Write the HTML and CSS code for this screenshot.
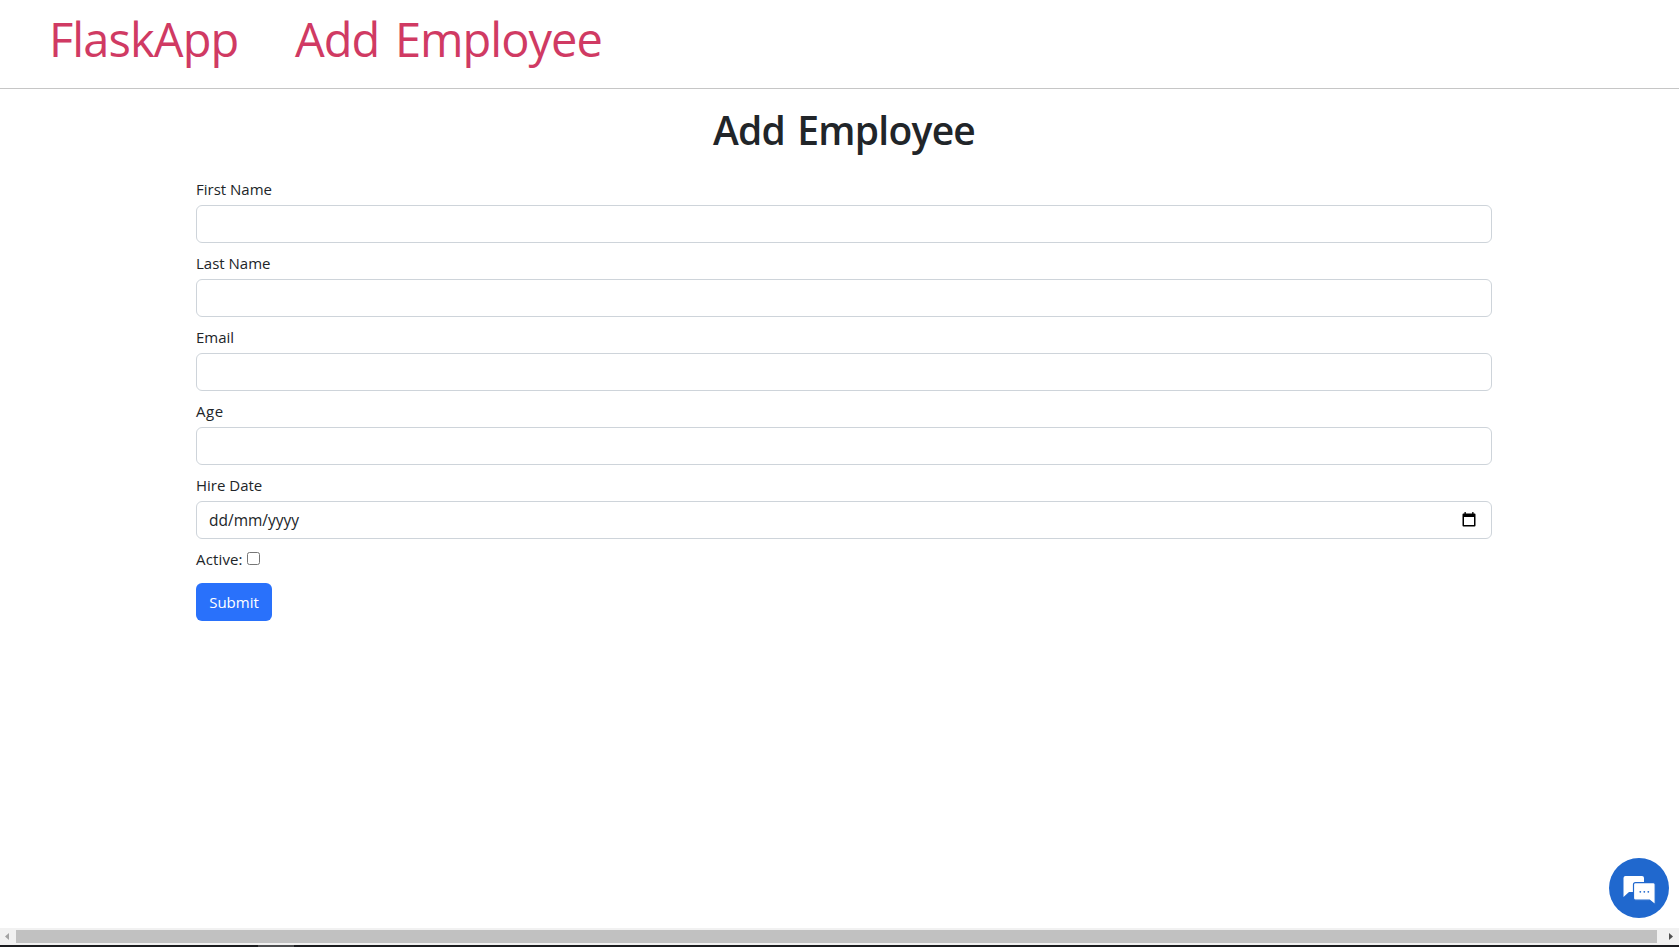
FILE: index.html
```html
<!DOCTYPE html>
<html lang="en">
<head>
<meta charset="utf-8">
<title>Add Employee</title>
<link rel="stylesheet" href="styles.css">
</head>
<body>
<header class="nav">
  <a class="brand">FlaskApp</a>
  <a class="nav-link">Add Employee</a>
</header>
<main class="content">
  <h1 class="title"><span>Add Employee</span></h1>
  <form class="form">
    <div class="group"><label class="first">First Name</label><div class="control"></div></div>
    <div class="group"><label class="last">Last Name</label><div class="control"></div></div>
    <div class="group"><label class="email">Email</label><div class="control"></div></div>
    <div class="group"><label class="age">Age</label><div class="control"></div></div>
    <div class="group"><label class="hire">Hire Date</label>
      <div class="control date"><span class="placeholder">dd/mm/yyyy</span>
        <svg class="calendar" width="14" height="15" viewBox="0 0 14 15"><path fill="#000" fill-rule="evenodd" d="M2.5 0h1.3v1.5h6.4V0h1.3v1.5H12.500a1 1 0 0 1 1 1V13.500a1 1 0 0 1-1 1H1.500a1 1 0 0 1-1-1V2.500a1 1 0 0 1 1-1h1zM2 5v8h10V5z"/></svg>
      </div>
    </div>
    <div class="check"><label class="active">Active:</label><span class="box"></span></div>
    <button type="button" class="submit"><span>Submit</span></button>
  </form>
</main>
<div class="chat">
  <svg width="60" height="60" viewBox="0 0 60 60">
    <circle cx="30" cy="30" r="30" fill="#2068ce"/>
    <path fill="#fff" d="M16.500 18H33q2 0 2 2v14H20L14.500 39V20q0-2 2-2z"/>
    <path fill="#fff" stroke="#2068ce" stroke-width="1.200" d="M26.500 24.600h17.700q2 0 2 2v20L40.500 42.200H26.500q-2 0-2-2V26.600q0-2 2-2z"/>
    <g fill="#2068ce"><circle cx="31.300" cy="33.800" r=".9"/><circle cx="35.300" cy="33.800" r=".9"/><circle cx="39.300" cy="33.800" r=".9"/></g>
  </svg>
</div>
<footer class="bottom">
  <div class="scrollbar">
    <svg width="16" height="17" viewBox="0 0 16 17"><path fill="#a3a3a3" d="M9 5v7L5 8.500z"/></svg>
    <div class="thumb"></div>
    <svg width="22" height="17" viewBox="0 0 22 17"><path fill="#505050" d="M12 5v7l4-3.500z"/></svg>
  </div>
  <div class="edge"><div class="edge-item"></div></div>
</footer>
</body>
</html>
```
FILE: styles.css
```css
* { box-sizing: border-box; }
body {
  margin: 0;
  height: 947px;
  display: flex;
  flex-direction: column;
  overflow: hidden;
  background: #fff;
  color: #212529;
  font: 16px/24px "Open Sans", "Noto Sans", sans-serif;
}
.nav {
  display: flex;
  height: 89px;
  padding: 3px 0 0 49px;
  border-bottom: 1px solid #c6c6c6;
  color: #d03a63;
  font-size: 47px;
  line-height: 72px;
  white-space: nowrap;
}
.brand { width: 246px; letter-spacing: -0.9px; }
.nav-link { letter-spacing: -1px; word-spacing: 4.5px; }
.content { flex: 1; width: 1296px; margin-left: 196px; }
.title {
  margin: 17px 0 23px;
  font-size: 39px;
  line-height: 48px;
  font-weight: 600;
  letter-spacing: -0.75px;
  word-spacing: 3px;
  text-align: center;
}
.group { margin-bottom: 8px; }
.group label { display: block; height: 24px; margin-bottom: 4px; font-size: 15px; }
.group .age { letter-spacing: 0.6px; }
.placeholder { font-size: 15.5px; }
.calendar { margin-bottom: 1px; }
.control {
  display: flex;
  align-items: center;
  justify-content: space-between;
  height: 38px;
  padding: 0 15px 0 12px;
  border: 1px solid #ced4da;
  border-radius: 6px;
}
.check { display: flex; align-items: center; height: 24px; font-size: 15px; }
.active { width: 51px; letter-spacing: 0.15px; }
.box { width: 13px; height: 13px; margin-bottom: 2px; border: 1px solid #767676; border-radius: 2.5px; }
.submit {
  display: block;
  width: 76px;
  height: 38px;
  margin-top: 12px;
  padding: 0;
  border: 0;
  border-radius: 6px;
  background: #2971fb;
  color: #fff;
  font: 15px/24px "Open Sans", "Noto Sans", sans-serif;
}
.chat { position: absolute; left: 1609px; top: 858px; width: 60px; height: 60px; }
.chat svg { display: block; }
.scrollbar { display: flex; align-items: center; height: 17px; background: #f1f1f1; }
.thumb { flex: 1; height: 13px; background: #c1c1c1; }
.edge { height: 2px; padding-left: 258px; background: #1a1b1e; }
.edge-item { width: 36px; height: 2px; background: #4a4b4d; }
```
